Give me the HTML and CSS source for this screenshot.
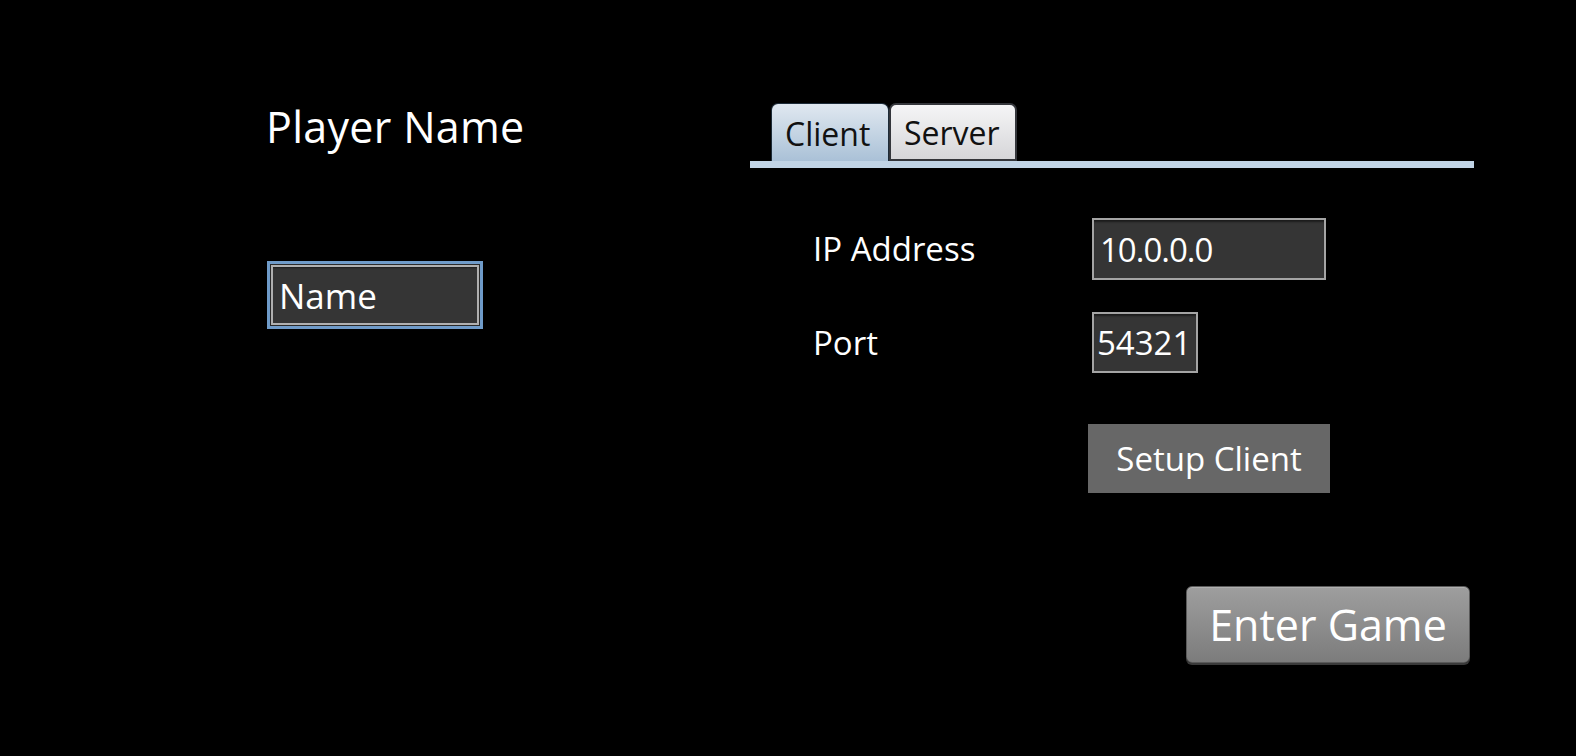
FILE: index.html
```html
<!DOCTYPE html>
<html>
<head>
<meta charset="utf-8">
<link rel="stylesheet" href="styles.css">
</head>
<body>
<div class="screen">
  <div class="left">
    <div class="title">Player Name</div>
    <input class="name-input" type="text" value="Name">
  </div>
  <div class="right">
    <div class="tabs">
      <div class="tab tab-active">Client</div>
      <div class="tab tab-idle">Server</div>
    </div>
    <div class="tab-bar"></div>
    <div class="form">
      <div class="label">IP Address</div>
      <input class="field field-ip" type="text" value="10.0.0.0">
      <div class="label">Port</div>
      <input class="field field-port" type="text" value="54321">
    </div>
    <button class="setup-btn">Setup Client</button>
    <button class="enter-btn">Enter Game</button>
  </div>
</div>
</body>
</html>
```
FILE: styles.css
```css
html, body {
  margin: 0;
  padding: 0;
  background: #000;
}
body {
  width: 1576px;
  height: 756px;
  overflow: hidden;
  font-family: "Open Sans", "Noto Sans", sans-serif;
  color: #fff;
}
.screen {
  display: flex;
  height: 756px;
}
.left {
  width: 484px;
  padding-left: 266px;
  padding-top: 106px;
  display: flex;
  flex-direction: column;
  align-items: flex-start;
}
.title {
  font-size: 43px;
  line-height: 42px;
  letter-spacing: 0.3px;
}
.name-input {
  margin-top: 113px;
  margin-left: 1px;
  width: 216px;
  height: 68px;
  box-sizing: border-box;
  border: 3px solid #6f9bc9;
  box-shadow: inset 0 0 0 1px #2a2a2a, inset 0 0 0 3px #b0b0b0, inset 0 5px 2px -1px #1c1c1c;
  background: #353535;
  color: #fff;
  font-family: "Open Sans", "Noto Sans", sans-serif;
  font-size: 35px;
  padding: 0 0 0 9px;
  outline: none;
}
.right {
  width: 724px;
  padding-top: 103px;
  display: flex;
  flex-direction: column;
  align-items: flex-start;
}
.tabs {
  display: flex;
  margin-left: 21px;
  height: 58px;
  align-items: flex-end;
}
.tab {
  box-sizing: border-box;
  color: #111;
  font-size: 32px;
  padding-left: 13px;
  display: flex;
  align-items: center;
  border-radius: 7px 7px 0 0;
}
.tab-active {
  width: 118px;
  height: 58px;
  background: linear-gradient(#e0e8f0, #aac1d7);
  border: 1px solid #1d2b38;
  border-bottom: none;
  padding-top: 1px;
}
.tab-idle {
  width: 128px;
  height: 58px;
  background: linear-gradient(#f5f5f6, #d6d6d9);
  border: 2px solid #34363b;
  padding-top: 1px;
}
.tab-bar {
  width: 724px;
  height: 7px;
  background: #c1d4e6;
}
.form {
  margin-top: 50px;
  padding-left: 63px;
  display: grid;
  grid-template-columns: 279px auto;
  row-gap: 32px;
  align-items: center;
}
.label {
  font-size: 33px;
  line-height: 40px;
}
.field {
  box-sizing: border-box;
  border: 2px solid #a4a4a4;
  box-shadow: inset 0 3px 2px -1px #1c1c1c;
  background: #353535;
  color: #fff;
  font-family: "Open Sans", "Noto Sans", sans-serif;
  font-size: 33px;
  outline: none;
}
.field-ip {
  width: 234px;
  height: 62px;
  padding: 0 0 0 6px;
  letter-spacing: -1px;
}
.field-port {
  width: 106px;
  height: 61px;
  padding: 0 0 0 3px;
}
.setup-btn {
  margin-top: 51px;
  margin-left: 338px;
  width: 242px;
  height: 69px;
  border: none;
  background: #676767;
  color: #fff;
  font-family: "Open Sans", "Noto Sans", sans-serif;
  font-size: 33px;
  padding: 0;
}
.enter-btn {
  margin-top: 93px;
  margin-left: 436px;
  width: 284px;
  height: 77px;
  box-sizing: border-box;
  border: 1px solid #5a5a5a;
  border-radius: 6px;
  background: linear-gradient(#9e9e9e, #7c7c7c);
  box-shadow: 0 2px 0 #3a3a3a, inset 0 1px 0 #b0b0b0;
  color: #fff;
  font-family: "Open Sans", "Noto Sans", sans-serif;
  font-size: 43px;
  padding: 0;
}
```
